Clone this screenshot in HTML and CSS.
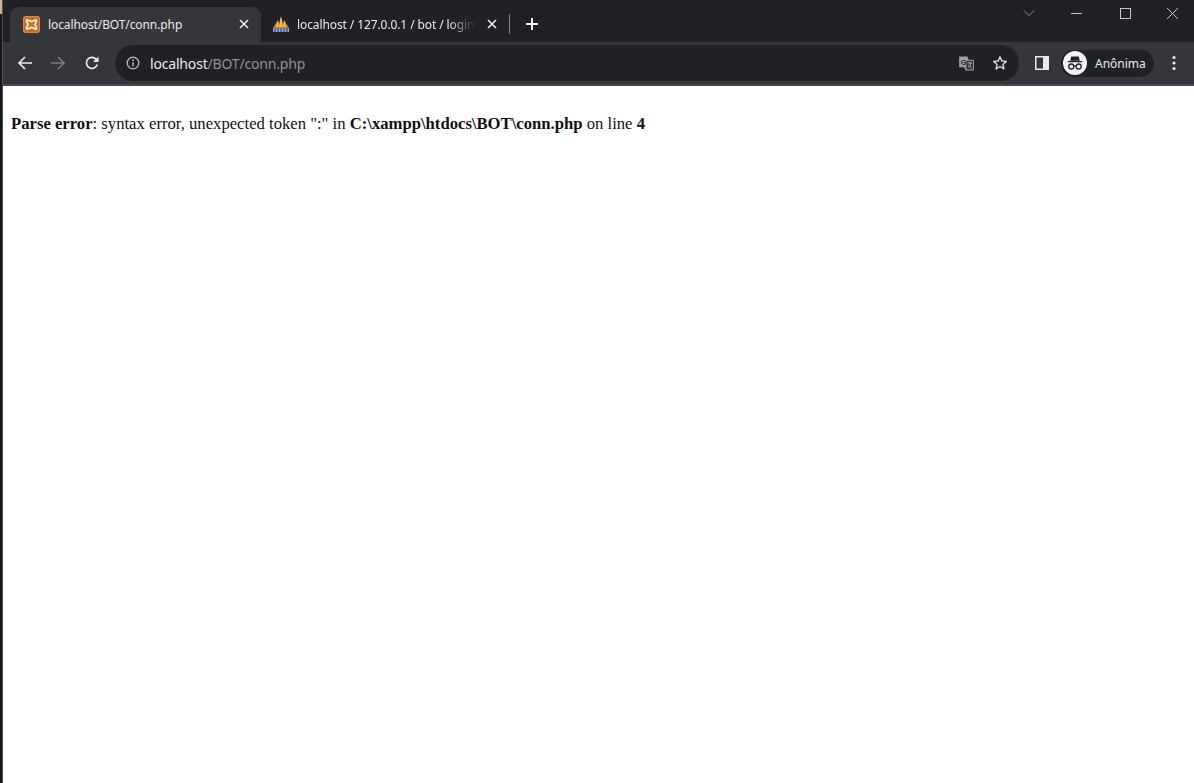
FILE: index.html
```html
<!DOCTYPE html>
<html lang="pt">
<head>
<meta charset="utf-8">
<title>localhost/BOT/conn.php</title>
<link rel="stylesheet" href="styles.css">
</head>
<body>
<div class="edge"><span class="edge-tan"></span></div>
<div class="window">
  <header class="tabstrip">
    <div class="tab tab-active">
      <svg class="favicon" viewBox="0 0 16 16"><rect width="16" height="16" rx="2.500" fill="#d08a4e"/><rect x="1" y="1" width="14" height="14" rx="2" fill="#c2702f"/><path d="M3.500 3.800c2.200 0 2.700 1.400 4.500 1.400s2.300-1.400 4.500-1.400c.6 2.200-.6 3-1.500 4.200.9 1.200 2.100 2 1.500 4.200-2.200 0-2.700-1.400-4.500-1.400s-2.300 1.400-4.500 1.400C2.900 10 4.100 9.200 5 8 4.100 6.800 2.900 6 3.500 3.800z" fill="none" stroke="#fbe9d6" stroke-width="1.700"/></svg>
      <span class="tab-title">localhost/BOT/conn.php</span>
      <svg class="tab-close" viewBox="0 0 10 10"><path d="M1 1l8 8M9 1l-8 8" stroke="#e8eaed" stroke-width="1.600"/></svg>
    </div>
    <div class="tab tab-idle">
      <svg class="favicon favicon-pma" viewBox="0 0 18 18"><path d="M1.500 12.500L6 5l1.300 7.500z" fill="#e8962e"/><path d="M6.300 12.500L9 1l2.700 11.500z" fill="#f0a63c"/><path d="M10.700 12.500L12 5l4.500 7.500z" fill="#e8962e"/><path d="M9 3v9.500M6 6.500l-.6 6M12 6.500l.6 6" stroke="#f7e3c0" stroke-width=".7"/><rect x="1" y="12.500" width="16" height="4.500" fill="#9aa0c4"/><path d="M3 13v4M6 13v4M9 13v4M12 13v4M15 13v4" stroke="#2b2d42" stroke-width=".9"/></svg>
      <span class="tab-title tab-title-fade">localhost / 127.0.0.1 / bot / login</span>
      <svg class="tab-close" viewBox="0 0 10 10"><path d="M1 1l8 8M9 1l-8 8" stroke="#e8eaed" stroke-width="1.600"/></svg>
    </div>
    <span class="tab-sep"></span>
    <svg class="new-tab" viewBox="0 0 14 14"><path d="M7 1v12M1 7h12" stroke="#f1f3f4" stroke-width="2"/></svg>
    <div class="win-controls">
      <svg class="win-btn" viewBox="0 0 48 26"><path d="M19 10.500l5 5 5-5" fill="none" stroke="#8e9094"/></svg>
      <svg class="win-btn" viewBox="0 0 48 26"><path d="M18 13.500h11" stroke="#c4c6c9"/></svg>
      <svg class="win-btn" viewBox="0 0 48 26"><rect x="19.500" y="8.500" width="10" height="10" fill="none" stroke="#c4c6c9"/></svg>
      <svg class="win-btn" viewBox="0 0 48 26"><path d="M18 8l11 11M29 8L18 19" stroke="#c4c6c9"/></svg>
    </div>
  </header>
  <nav class="toolbar">
    <svg class="nav-icon nav-back" viewBox="0 0 16 16"><path d="M15 8H2M8 2L2 8l6 6" fill="none" stroke="#e8eaed" stroke-width="1.700"/></svg>
    <svg class="nav-icon nav-forward" viewBox="0 0 16 16"><path d="M1 8h13M8 2l6 6-6 6" fill="none" stroke="#7c7e82" stroke-width="1.500"/></svg>
    <svg class="nav-icon nav-reload" viewBox="0 0 16 16"><path d="M13.200 9.500A5.500 5.500 0 1 1 12 4.200L14 6" fill="none" stroke="#e8eaed" stroke-width="1.700"/><path d="M14.500 1.500v5.500H9z" fill="#e8eaed"/></svg>
    <div class="omnibox">
      <svg class="info-icon" viewBox="0 0 14 14"><circle cx="7" cy="7" r="5.800" fill="none" stroke="#bdc1c6" stroke-width="1.300"/><path d="M7 6.200v4" stroke="#bdc1c6" stroke-width="1.400"/><circle cx="7" cy="4.200" r=".9" fill="#bdc1c6"/></svg>
      <span class="url"><span class="url-host">localhost</span>/BOT/conn.php</span>
      <svg class="translate-icon" viewBox="0 0 16 16"><path d="M1 1.500h8l1 3h4.500a.5.500 0 0 1 .5.500v9a.5.500 0 0 1-.5.500H7l-1-3H1.500a.5.500 0 0 1-.5-.5z" fill="#9a9da1"/><rect x="8" y="5.500" width="6" height="8" fill="#2b2c2f"/><text class="translate-g" x="2.500" y="9">G</text><path d="M9 7.500h4M11 6.500v1M12.300 7.500c-.4 2-1.600 3.500-3 4.300M10 9c.5 1.200 1.500 2.300 3 3" fill="none" stroke="#c4c6c9" stroke-width=".8"/></svg>
      <svg class="star-icon" viewBox="0 0 16 16"><path d="M8 1.800l1.800 4.200 4.500.4-3.400 3 1 4.500L8 11.500l-3.900 2.400 1-4.500-3.400-3 4.500-.4z" fill="none" stroke="#dfe1e5" stroke-width="1.400" stroke-linejoin="round"/></svg>
    </div>
    <svg class="panel-icon" viewBox="0 0 14 14"><path fill-rule="evenodd" d="M0 0h14v14H0zM1.500 1.500v11H8v-11z" fill="#e8eaed"/></svg>
    <div class="profile">
      <svg class="avatar" viewBox="0 0 24 24"><circle cx="12" cy="12" r="12" fill="#f1f3f4"/><path d="M8.200 5.500h7.600l1 4.200H7.200zM4.800 10h14.400v1.300H4.800z" fill="#202124"/><circle cx="8.300" cy="15.500" r="2.500" fill="none" stroke="#202124" stroke-width="1.300"/><circle cx="15.700" cy="15.500" r="2.500" fill="none" stroke="#202124" stroke-width="1.300"/><path d="M10.800 15.200c.8-.5 1.600-.5 2.400 0" fill="none" stroke="#202124" stroke-width="1.100"/></svg>
      <span class="profile-name">Anônima</span>
    </div>
    <svg class="menu-icon" viewBox="0 0 4 16"><circle cx="2" cy="2.500" r="1.600" fill="#e8eaed"/><circle cx="2" cy="8" r="1.600" fill="#e8eaed"/><circle cx="2" cy="13.500" r="1.600" fill="#e8eaed"/></svg>
  </nav>
  <main class="page">
    <br>
    <b>Parse error</b>: syntax error, unexpected token ":" in <b>C:\xampp\htdocs\BOT\conn.php</b> on line <b>4</b><br>
  </main>
</div>
</body>
</html>
```

FILE: styles.css
```css
* { box-sizing: border-box; }
html, body { height: 100%; }
body {
  margin: 0;
  display: flex;
  height: 783px;
  overflow: hidden;
  background: #fff;
}
.edge {
  flex: 0 0 3px;
  background: linear-gradient(90deg, #15171b 0 2px, #4a4d52 2px 3px);
  display: flex;
  flex-direction: column;
}
.edge-tan {
  height: 14px;
  background: #c9b794;
  width: 2px;
}
.window {
  flex: 1;
  min-width: 0;
  display: flex;
  flex-direction: column;
}
.tabstrip {
  height: 42px;
  flex: none;
  background: #202124;
  display: flex;
  align-items: flex-end;
  padding-left: 7px;
  font-family: "Noto Sans", sans-serif;
  font-size: 12px;
}
.tab {
  width: 251px;
  height: 35px;
  flex: none;
  display: flex;
  align-items: center;
  padding-bottom: 1px;
  color: #e8eaed;
}
.tab-active {
  background: #35363a;
  border-radius: 9px 9px 0 0;
  padding-left: 13px;
  padding-right: 12px;
}
.tab-idle {
  width: 248px;
  padding-left: 11px;
  padding-right: 12px;
}
.favicon { width: 17px; height: 17px; flex: none; margin-right: 8px; }
.favicon-pma { width: 18px; height: 18px; margin-right: 7px; }
.tab-title {
  flex: 1;
  min-width: 0;
  white-space: nowrap;
  overflow: hidden;
  letter-spacing: -0.1px;
}
.tab-title-fade {
  -webkit-mask-image: linear-gradient(90deg, #000 85%, transparent 100%);
  mask-image: linear-gradient(90deg, #000 85%, transparent 100%);
}
.tab-close { width: 10px; height: 10px; flex: none; margin-left: 12px; }
.tab-sep {
  width: 1px;
  height: 20px;
  background: #7d7f83;
  align-self: flex-start;
  margin-top: 14px;
  flex: none;
}
.new-tab {
  width: 14px;
  height: 14px;
  flex: none;
  align-self: flex-start;
  margin: 17px 0 0 15px;
}
.win-controls {
  margin-left: auto;
  margin-right: -3px;
  align-self: flex-start;
  display: flex;
}
.win-btn { width: 48px; height: 26px; display: block; }
.toolbar {
  height: 44px;
  flex: none;
  background: #35363a;
  display: flex;
  align-items: center;
  border-bottom: 2px solid #48494d;
}
.nav-icon { width: 16px; height: 16px; flex: none; }
.nav-back { margin-left: 14px; }
.nav-forward { margin-left: 17px; }
.nav-reload { margin-left: 18px; }
.omnibox {
  width: 904px;
  height: 36px;
  flex: none;
  margin-left: 15px;
  background: #202124;
  border-radius: 18px;
  display: flex;
  align-items: center;
  padding: 0 10px 0 11px;
  font-family: "Noto Sans", sans-serif;
  font-size: 14px;
}
.info-icon { width: 14px; height: 14px; flex: none; }
.url { margin-left: 10px; color: #8f9296; flex: 1; letter-spacing: -0.18px; }
.url-host { color: #e8eaed; }
.translate-icon { width: 17px; height: 17px; flex: none; margin-right: 17px; }
.translate-g { font: 700 7px "Liberation Sans", sans-serif; fill: #2b2c2f; }
.star-icon { width: 16px; height: 16px; flex: none; margin-right: 1px; }
.panel-icon { width: 14px; height: 14px; flex: none; margin-left: 16px; }
.profile {
  width: 93px;
  height: 27px;
  flex: none;
  margin-left: 12px;
  background: #202124;
  border-radius: 14px;
  display: flex;
  align-items: center;
  padding-left: 2px;
  color: #e8eaed;
  font-family: "Noto Sans", sans-serif;
  font-size: 12px;
}
.avatar { width: 24px; height: 24px; flex: none; }
.profile-name { margin-left: 8px; }
.menu-icon { width: 4px; height: 16px; flex: none; margin-left: 18px; }
.page {
  flex: 1;
  background: #fff;
  padding: 8px 8px 8px;
  color: #111;
  font-family: "Liberation Serif", "Times New Roman", serif;
  font-size: 16.66px;
}
```
